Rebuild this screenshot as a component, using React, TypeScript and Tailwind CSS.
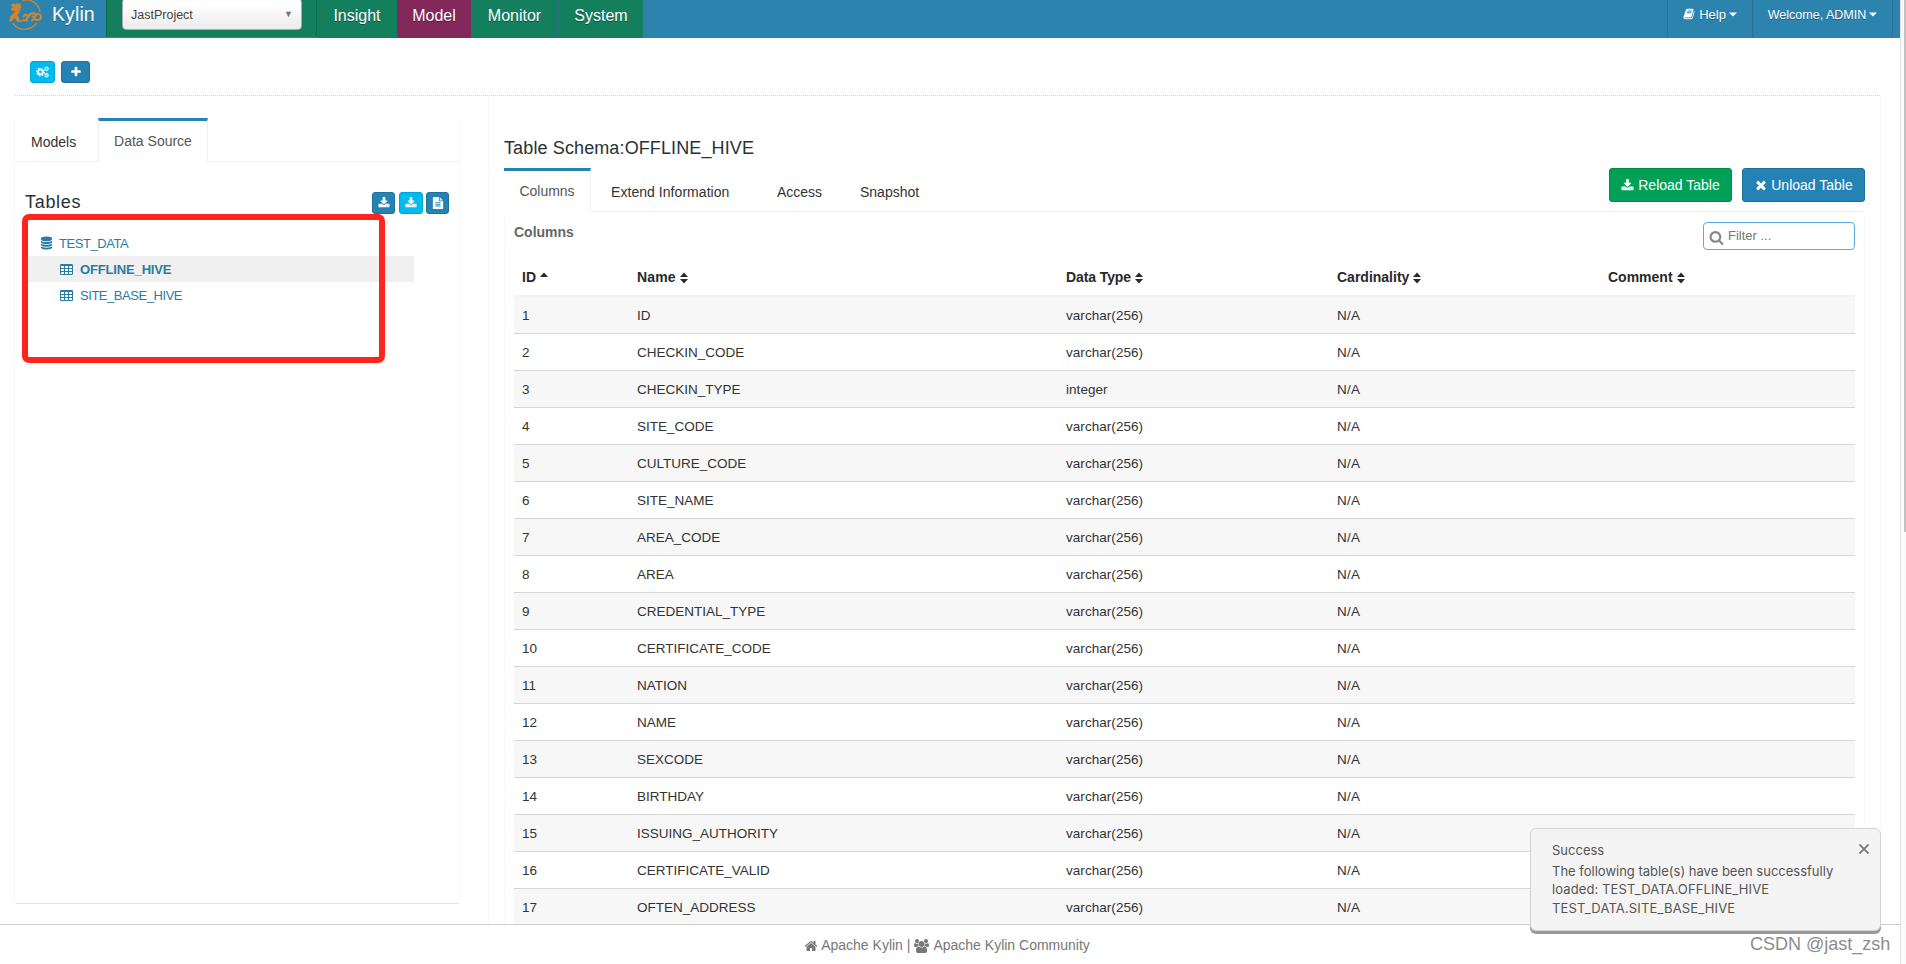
import type { ReactNode } from "react";

const icons = {
  download:
    "M1344 1344q0-26-19-45t-45-19-45 19-19 45 19 45 45 19 45-19 19-45zm256 0q0-26-19-45t-45-19-45 19-19 45 19 45 45 19 45-19 19-45zm128-224v320q0 40-28 68t-68 28h-1472q-40 0-68-28t-28-68v-320q0-40 28-68t68-28h465l135 136q58 56 136 56t136-56l136-136h464q40 0 68 28t28 68zm-325-569q17 41-14 70l-448 448q-18 19-45 19t-45-19l-448-448q-31-29-14-70 17-39 59-39h256v-448q0-26 19-45t45-19h256q26 0 45 19t19 45v448h256q42 0 59 39z",
  plus: "M1600 736v192q0 40-28 68t-68 28h-416v416q0 40-28 68t-68 28h-192q-40 0-68-28t-28-68v-416h-416q-40 0-68-28t-28-68v-192q0-40 28-68t68-28h416v-416q0-40 28-68t68-28h192q40 0 68 28t28 68v416h416q40 0 68 28t28 68z",
  remove:
    "M1490 1322q0 40-28 68l-136 136q-28 28-68 28t-68-28l-294-294-294 294q-28 28-68 28t-68-28l-136-136q-28-28-28-68t28-68l294-294-294-294q-28-28-28-68t28-68l136-136q28-28 68-28t68 28l294 294 294-294q28-28 68-28t68 28l136 136q28 28 28 68t-28 68l-294 294 294 294q28 28 28 68z",
  home: "M1472 992v480q0 26-19 45t-45 19h-384v-384h-256v384h-384q-26 0-45-19t-19-45v-480q0-1 .5-3t.5-3l575-474 575 474q1 2 1 6zm223-69l-62 74q-8 9-21 11h-3q-13 0-21-7l-692-577-692 577q-12 8-24 7-13-2-21-11l-62-74q-8-10-7-23.5t11-21.5l719-599q32-26 76-26t76 26l244 204v-195q0-14 9-23t23-9h192q14 0 23 9t9 23v408l219 182q10 8 11 21.5t-7 23.5z",
  search:
    "M1216 832q0-185-131.5-316.5t-316.5-131.5-316.5 131.5-131.5 316.5 131.5 316.5 316.5 131.5 316.5-131.5 131.5-316.5zm512 832q0 52-38 90t-90 38q-54 0-90-38l-343-342q-179 124-399 124-143 0-273.5-55.5t-225-150-150-225-55.5-273.5 55.5-273.5 150-225 225-150 273.5-55.5 273.5 55.5 225 150 150 225 55.5 273.5q0 220-124 399l343 343q37 37 37 90z",
  database:
    "M896 768q237 0 443-43t325-127v170q0 69-103 128t-280 93.5-385 34.5-385-34.5-280-93.5-103-128v-170q119 84 325 127t443 43zm0 768q237 0 443-43t325-127v170q0 69-103 128t-280 93.5-385 34.5-385-34.5-280-93.5-103-128v-170q119 84 325 127t443 43zm0-384q237 0 443-43t325-127v170q0 69-103 128t-280 93.5-385 34.5-385-34.5-280-93.5-103-128v-170q119 84 325 127t443 43zm0-1152q208 0 385 34.5t280 93.5 103 128v128q0 69-103 128t-280 93.5-385 34.5-385-34.5-280-93.5-103-128v-128q0-69 103-128t280-93.5 385-34.5z",
  file: "M1596 476q14 14 28 36h-472v-472q22 14 36 28zm-476 164h544v1056q0 40-28 68t-68 28h-1344q-40 0-68-28t-28-68v-1600q0-40 28-68t68-28h800v544q0 40 28 68t68 28zm160 736v-64q0-14-9-23t-23-9h-704q-14 0-23 9t-9 23v64q0 14 9 23t23 9h704q14 0 23-9t9-23zm0-256v-64q0-14-9-23t-23-9h-704q-14 0-23 9t-9 23v64q0 14 9 23t23 9h704q14 0 23-9t9-23zm0-256v-64q0-14-9-23t-23-9h-704q-14 0-23 9t-9 23v64q0 14 9 23t23 9h704q14 0 23-9t9-23z",
  book: "M1703 478q40 57 18 129l-275 906q-19 64-76.5 107.5t-122.5 43.5h-923q-77 0-148.5-53.5t-99.5-131.5q-24-67-2-127 0-4 3-27t4-37q1-8-3-21.5t-3-19.5q2-11 8-21t16.5-23.5 16.5-23.5q23-38 45-91.5t30-91.5q3-10 .5-30t-.5-28q3-11 17-28t17-23q21-36 42-92t25-90q1-9-2.5-32t.5-28q4-13 22-30.5t22-22.5q19-26 42.5-84.5t27.5-96.5q1-8-3-25.5t-2-26.5q2-8 9-18t18-23 17-21q8-12 16.5-30.5t15-35 16-36 19.5-32 26.5-23.5 36-11.5 47.5 5.5l-1 3q38-9 51-9h761q74 0 114 56t18 130l-274 906q-36 119-71.5 153.5t-128.5 34.5h-869q-27 0-38 15-11 16-1 43 24 70 144 70h923q29 0 56-15.5t35-41.5l300-987q7-22 5-57 38 15 59 43zm-1064 2q-4 13 2 22.5t20 9.5h608q13 0 25.5-9.5t16.5-22.5l21-64q4-13-2-22.5t-20-9.5h-608q-13 0-25.5 9.5t-16.5 22.5zm-83 256q-4 13 2 22.5t20 9.5h608q13 0 25.5-9.5t16.5-22.5l21-64q4-13-2-22.5t-20-9.5h-608q-13 0-25.5 9.5t-16.5 22.5z",
  users:
    "M593 896q-162 5-265 128h-134q-82 0-138-40.5t-56-118.5q0-353 124-353 6 0 43.5 21t97.5 42.5 119 21.5q67 0 133-23-5 37-5 66 0 139 81 256zm1071 637q0 120-73 189.5t-194 69.5h-874q-121 0-194-69.5t-73-189.5q0-53 3.5-103.5t14-109 26.5-108.5 43-97.5 62-81 85.5-53.5 111.5-20q10 0 43 21.5t73 48 107 48 135 21.5 135-21.5 107-48 73-48 43-21.5q61 0 111.5 20t85.5 53.5 62 81 43 97.5 26.5 108.5 14 109 3.5 103.5zm-1024-1277q0 106-75 181t-181 75-181-75-75-181 75-181 181-75 181 75 75 181zm704 384q0 159-112.5 271.5t-271.5 112.5-271.5-112.5-112.5-271.5 112.5-271.5 271.5-112.5 271.5 112.5 112.5 271.5zm576 225q0 78-56 118.5t-138 40.5h-134q-103-123-265-128 81-117 81-256 0-29-5-66 66 23 133 23 59 0 119-21.5t97.5-42.5 43.5-21q124 0 124 353zm-128-609q0 106-75 181t-181 75-181-75-75-181 75-181 181-75 181 75 75 181z",
};

function Icon({
  name,
  box = "0 0 1792 1792",
  className,
}: {
  name: keyof typeof icons;
  box?: string;
  className: string;
}) {
  return (
    <svg viewBox={box} fill="currentColor" className={`shrink-0 ${className}`}>
      <path d={icons[name]} />
    </svg>
  );
}

function TableIcon() {
  return (
    <svg viewBox="0 0 13 11" className="h-[11px] w-[13px] shrink-0">
      <rect width="13" height="11" rx="1.2" fill="currentColor" />
      {[2, 5, 8].map((y) =>
        [1, 5, 9].map((x) => (
          <rect key={`${x}-${y}`} x={x} y={y} width="3" height="2" fill="white" />
        ))
      )}
    </svg>
  );
}

function CogsIcon() {
  return (
    <svg viewBox="0 0 13 12" fill="none" stroke="white" className="h-3 w-[13px] shrink-0">
      <circle cx="4.5" cy="6" r="2.400" strokeWidth="1.900" />
      <circle cx="4.5" cy="6" r="3.800" strokeWidth="1.200" strokeDasharray="1.500 1.485" />
      <circle cx="10.6" cy="2.700" r="1.400" strokeWidth="1.100" />
      <circle cx="10.6" cy="2.700" r="2.100" strokeWidth=".6" strokeDasharray="1.100 1.100" />
      <circle cx="10.6" cy="9.300" r="1.400" strokeWidth="1.100" />
      <circle cx="10.6" cy="9.300" r="2.100" strokeWidth=".6" strokeDasharray="1.100 1.100" />
    </svg>
  );
}

const headers = [
  { label: "ID", className: "" },
  { label: "Name", className: "tracking-[.15px]" },
  { label: "Data Type", className: "tracking-[-.1px]" },
  { label: "Cardinality", className: "" },
  { label: "Comment", className: "" },
];

const rows = [
  ["ID", "varchar(256)"],
  ["CHECKIN_CODE", "varchar(256)"],
  ["CHECKIN_TYPE", "integer"],
  ["SITE_CODE", "varchar(256)"],
  ["CULTURE_CODE", "varchar(256)"],
  ["SITE_NAME", "varchar(256)"],
  ["AREA_CODE", "varchar(256)"],
  ["AREA", "varchar(256)"],
  ["CREDENTIAL_TYPE", "varchar(256)"],
  ["CERTIFICATE_CODE", "varchar(256)"],
  ["NATION", "varchar(256)"],
  ["NAME", "varchar(256)"],
  ["SEXCODE", "varchar(256)"],
  ["BIRTHDAY", "varchar(256)"],
  ["ISSUING_AUTHORITY", "varchar(256)"],
  ["CERTIFICATE_VALID", "varchar(256)"],
  ["OFTEN_ADDRESS", "varchar(256)"],
];

const tableGrid = "grid grid-cols-[115px_429px_271px_271px_1fr]";

function Logo() {
  return (
    <svg
      viewBox="0 0 35 31"
      fill="none"
      stroke="#d08530"
      strokeLinecap="round"
      strokeLinejoin="round"
      className="h-[31px] w-[35px] shrink-0"
    >
      <path
        d="M15 .3C23-1.500 30 3 32 11.500M5 23.500C8.500 28 13 29.800 18 29.200c5-.6 8-2.700 10.500-5.700"
        strokeWidth="1.300"
      />
      <path
        fill="#d08530"
        strokeWidth=".8"
        d="M3.500 5l2.500-1.500L7 5l3-2 .5 1.500L13 4l-1.500 2.500 2 .5-2 1.500 1.500 1.500-2.500.5 1 2-2.500 1.500 1 2.500 1 3.500 2.500.5v1H9l-1.500-4-2.500 1-1 2.500H1.500L3 16l3.500-3 .5-3-3 .5L3 9l2.500-1.500z"
      />
      <path
        d="M14.500 20.500h4.500c-1.500-2 1.500-3 .5-4.800-1-1.500-3.500-1.200-4 .8M20.500 17c.5-4.500 6.500-5 7-1.700.2 2-2.500 2.500-3 .7M28 14.500c3.500-1.500 5.500.5 5 3-.6 2.500-3.500 3.200-7 1.500l-2 1.500"
        strokeWidth="2.100"
      />
    </svg>
  );
}

function Navbar() {
  return (
    <header className="flex h-[38px] w-[1900px] bg-[#2c83ae] text-white">
      <div className="flex w-[106px] items-start pl-[8px]">
        <Logo />
        <span className="pl-[9px] text-[19.500px] leading-[28px] tracking-[.1px] [text-shadow:0_1px_0_rgba(0,0,0,.3)]">
          Kylin
        </span>
      </div>
      <div className="flex h-[37px] w-[211px] overflow-hidden border-x border-[#0f6b50] bg-[#137f5d] pl-[15px]">
        <div className="-mt-[2px] flex h-8 w-[180px] items-center justify-between rounded-[4px] border border-[#aaa] bg-linear-to-b from-white from-20% via-[#f6f6f6] via-50% to-[#ededed] px-2 pt-0.5 text-[12.500px] text-[#444]">
          <span>JastProject</span>
          <span className="text-[9px] text-[#777]">▼</span>
        </div>
      </div>
      <nav className="flex text-[16px] leading-[31px] [text-shadow:0_1px_0_rgba(0,0,0,.4)]">
        <span className="w-20 bg-[#137f5d] text-center">Insight</span>
        <span className="w-[74px] bg-[#82285a] text-center">Model</span>
        <span className="w-[88px] border-r border-[#2c6f8e] bg-[#137f5d] text-center">
          Monitor
        </span>
        <span className="w-[84px] bg-[#137f5d] text-center">System</span>
      </nav>
      <div className="ml-auto flex leading-[30px] [text-shadow:0_1px_0_rgba(0,0,0,.3)]">
        <div className="flex w-[85px] justify-center border-l border-[#256f94] text-[13px]">
          <Icon name="book" className="mt-[8px] mr-1 size-3" />
          Help
          <Caret />
        </div>
        <div className="flex w-[140px] justify-center border-l border-[#256f94] text-[12.500px]">
          Welcome, ADMIN
          <Caret />
        </div>
        <div className="w-2 border-l border-[#256f94]" />
      </div>
    </header>
  );
}

function Caret() {
  return (
    <svg viewBox="0 0 8 5" className="mt-3 ml-[3px] h-[5px] w-2 shrink-0 fill-white">
      <path d="M0 .5h8l-4 4z" />
    </svg>
  );
}

function Sort({ up = false }: { up?: boolean }) {
  return (
    <svg viewBox="0 0 8 12" className="ml-1 h-3 w-2 shrink-0 fill-[#292929]">
      <path d="M0 5h8L4 .5z" />
      {!up && <path d="M0 7h8l-4 4.500z" />}
    </svg>
  );
}

function SmallButton({ className, children }: { className: string; children: ReactNode }) {
  return (
    <button
      className={`flex h-[22px] items-center justify-center rounded-[3px] border text-white ${className}`}
    >
      {children}
    </button>
  );
}

function Sidebar() {
  return (
    <aside className="mt-[22px] h-[786px] w-[446px] rounded-b-[4px] border-x border-b border-[#f7f7f7] border-b-[#e2e2e2]">
      <div className="flex h-[44px] text-[14px] text-[#333]">
        <div className="w-[83px] border-b border-[#f0f0f0] pl-4 leading-[49px]">Models</div>
        <div className="w-[110px] border-x border-t-[3px] border-x-[#f0f0f0] border-t-[#2483b4] text-center leading-10 text-[#555]">
          Data Source
        </div>
        <div className="flex-1 border-b border-[#f0f0f0]" />
      </div>
      <div className="flex h-[52px] items-end justify-between pr-2.5 pl-2.5">
        <h3 className="text-[18px] leading-[24px] tracking-[.7px] text-[#263238]">Tables</h3>
        <div className="flex">
          <SmallButton className="w-[23px] border-[#1f719c] bg-[#2483b4]">
            <Icon name="download" className="size-3" />
          </SmallButton>
          <SmallButton className="ml-1 w-6 border-[#00a5d8] bg-[#00bbef]">
            <Icon name="download" className="size-3" />
          </SmallButton>
          <SmallButton className="ml-[3px] w-[23px] border-[#1f719c] bg-[#2483b4]">
            <Icon name="file" className="size-3" />
          </SmallButton>
        </div>
      </div>
      <div className="relative pt-4 text-[13px] tracking-[-.45px] text-[#2a7ca3]">
        <div className="flex h-[26px] items-center pl-[25px]">
          <Icon name="database" className="h-[14px] w-[13px]" />
          <span className="pt-px pl-1.5">TEST_DATA</span>
        </div>
        <div className="ml-[11px] flex h-[26px] w-[388px] items-center bg-[#f0f0f0] pl-[34px] font-bold tracking-[-.15px]">
          <TableIcon />
          <span className="pt-px pl-[7px]">OFFLINE_HIVE</span>
        </div>
        <div className="flex h-[26px] items-center pl-[45px]">
          <TableIcon />
          <span className="pt-px pl-[7px]">SITE_BASE_HIVE</span>
        </div>
        <div className="absolute top-0 left-[7px] h-[149px] w-[363px] rounded-[7px] border-[6px] border-[#fd251e]" />
      </div>
    </aside>
  );
}

function Schema() {
  return (
    <section className="ml-[28px] w-[1393px] border-x border-[#fafafa] px-[15px]">
      <h3 className="pt-[40px] text-[18px] leading-[24px] tracking-[.12px] text-[#263238]">
        Table Schema:OFFLINE_HIVE
      </h3>
      <div className="mt-2 flex h-[44px] text-[14px] text-[#333]">
        <div className="w-[87px] border-t-[3px] border-r border-t-[#2483b4] border-r-[#f0f0f0] text-center leading-[40px] text-[#555]">
          Columns
        </div>
        <div className="flex flex-1 border-b border-[#f0f0f0] leading-[48px]">
          <span className="w-[186px] pl-5 tracking-[.05px]">Extend Information</span>
          <span className="w-[83px]">Access</span>
          <span>Snapshot</span>
          <div className="ml-auto flex gap-[10px]">
            <button className="flex h-[34px] w-[123px] items-center justify-center rounded-[3px] border border-[#008d48] bg-[#00a157] text-[14px] text-white">
              <Icon name="download" className="mr-1 size-[13px]" />
              Reload Table
            </button>
            <button className="flex h-[34px] w-[123px] items-center justify-center rounded-[3px] border border-[#1f719c] bg-[#2483b4] text-[14px] text-white">
              <Icon name="remove" className="mr-[3px] size-[14px]" />
              Unload Table
            </button>
          </div>
        </div>
      </div>
      <div className="border-x border-[#fafafa] px-[9px]">
        <div className="flex h-12 justify-between">
          <h4 className="pt-[10px] text-[14px] leading-5 font-bold text-[#666]">Columns</h4>
          <div className="mt-[10px] flex h-7 w-[152px] items-center rounded-[4px] border border-[#58abdb] pl-[5px] text-[13px] text-[#777]">
            <Icon name="search" className="mt-[3px] mr-1 size-[15px] text-[#888]" />
            Filter ...
          </div>
        </div>
        <div
          className={`${tableGrid} h-[37px] border-b-2 border-[#f2f2f2] pl-2 text-[14px] font-bold text-[#292929]`}
        >
          {headers.map(({ label, className }) => (
            <div key={label} className={`flex items-center ${className}`}>
              {label}
              <Sort up={label === "ID"} />
            </div>
          ))}
        </div>
        {rows.map(([name, type], i) => (
          <div
            key={name}
            className={`${tableGrid} h-[37px] items-center border-b border-[#d6d6d6] pt-0.5 pl-2 text-[13.500px] text-[#333] odd:bg-[#f7f7f7] even:bg-white`}
          >
            <span>{i + 1}</span>
            <span>{name}</span>
            <span className="tracking-[.05px]">{type}</span>
            <span className="tracking-[.3px]">N/A</span>
          </div>
        ))}
      </div>
    </section>
  );
}

function Toast() {
  return (
    <div className="absolute top-[828px] left-[1530px] h-[103px] w-[351px] rounded-[6px] border border-[#d2d2d2] bg-[#f4f4f4] pt-3 pl-[21px] font-['Inter','Liberation_Sans',sans-serif] text-[13px] leading-[18.500px] text-[#555] shadow-[0_3px_0_#999]">
      <p>Success</p>
      <p className="pt-[2px]">
        The following table(s) have been successfully
        <br />
        <span className="tracking-[.1px]">loaded: TEST_DATA.OFFLINE_HIVE</span>
        <br />
        <span className="tracking-[.15px]">TEST_DATA.SITE_BASE_HIVE</span>
      </p>
      <svg
        viewBox="0 0 10 10"
        className="absolute top-[15px] right-[11px] size-[10px] stroke-[#777]"
        strokeWidth="1.800"
      >
        <path d="M.5 .5l9 9M9.500 .5l-9 9" />
      </svg>
    </div>
  );
}

export default function App() {
  return (
    <div className="relative flex h-[964px] w-[1906px] overflow-hidden bg-white font-['Liberation_Sans',Arial,sans-serif]">
      <div className="flex w-[1900px] flex-col">
        <Navbar />
        <main className="h-[886px] overflow-hidden pl-[14px]">
          <div className="mr-5 ml-px flex h-[58px] gap-[6px] border-b border-dotted border-[#d5d5d5] pt-[23px] pl-[15px]">
            <SmallButton className="w-[25px] border-[#00a5d8] bg-[#00bbef]">
              <CogsIcon />
            </SmallButton>
            <SmallButton className="w-[29px] border-[#1f719c] bg-[#2483b4]">
              <Icon name="plus" className="size-3" />
            </SmallButton>
          </div>
          <div className="flex">
            <Sidebar />
            <Schema />
          </div>
        </main>
        <footer className="flex h-10 items-center justify-center border-t border-[#ccc] pt-0.5 pr-[6px] text-[14px] text-[#777]">
          <Icon name="home" className="mr-[3px] size-[14px]" />
          Apache Kylin |
          <Icon name="users" box="0 0 1920 1792" className="mx-1 h-[14px] w-[15px]" />
          Apache Kylin Community
        </footer>
      </div>
      <div className="w-[6px] border-l border-[#e3e3e3] bg-[#fafafa]">
        <div className="ml-[3px] h-[532px] w-0.5 bg-[#c1c1c1]" />
      </div>
      <Toast />
      <div className="absolute top-[932px] left-[1750px] text-[18px] leading-6 whitespace-nowrap text-[#8c8c8c] [text-shadow:1px_1px_0_#fff]">
        CSDN @jast_zsh
      </div>
    </div>
  );
}
